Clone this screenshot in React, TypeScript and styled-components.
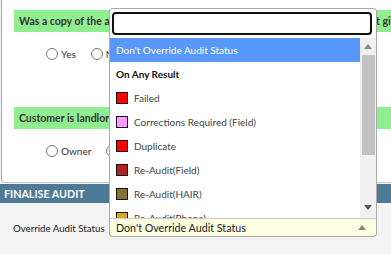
import React from "react";
import styled, { createGlobalStyle } from "styled-components";

const GlobalStyle = createGlobalStyle`
    html, body {
        margin: 0;
        padding: 0;
        background: #f3f3f3;
        font-family: "Lato", "Noto Sans", sans-serif;
        overflow: hidden;
    }
`;

interface Option {
    label: string;
    color: string;
}

const statusOptions: Option[] = [
    { label: "Failed", color: "#ff0000" },
    { label: "Corrections Required (Field)", color: "#ff99ff" },
    { label: "Duplicate", color: "#ff0000" },
    { label: "Re-Audit(Field)", color: "#b22222" },
    { label: "Re-Audit(HAIR)", color: "#807535" },
    { label: "Re-Audit(Phone)", color: "#daa520" },
];

const Page = styled.div`
    width: 391px;
    height: 254px;
    overflow: hidden;
`;

const Card = styled.div`
    margin-left: 1px;
    height: 183px;
    box-sizing: border-box;
    background: white;
    border-left: 1px solid #a9a9a9;
    border-bottom: 1px solid #c8c8c8;
    border-bottom-left-radius: 4px;
    padding: 10px 0 0 12px;
`;

const Question = styled.div`
    height: 97px;
`;

const QuestionTitle = styled.div`
    height: 22px;
    line-height: 22px;
    background: #90ee90;
    color: #333;
    font-weight: bold;
    font-size: 10.5px;
    padding-left: 5px;
    white-space: nowrap;
    overflow: hidden;
`;

const RadioRow = styled.div`
    display: flex;
    align-items: center;
    padding: 16px 0 0 32px;
    gap: 15px;
`;

const RadioOption = styled.label`
    display: flex;
    align-items: center;
    gap: 3px;
    font-size: 10px;
    color: #333;
`;

const RadioCircle = styled.span`
    width: 10px;
    height: 10px;
    border: 1px solid #767676;
    border-radius: 50%;
    background: white;
`;

const SectionHeader = styled.div`
    height: 19px;
    line-height: 19px;
    margin-top: 1px;
    background: #4e7a97;
    color: white;
    font-weight: bold;
    font-size: 10.7px;
    padding-left: 4px;
`;

const FormRow = styled.div`
    display: flex;
    align-items: center;
    padding: 15px 0 0 13px;
`;

const FieldLabel = styled.div`
    width: 96px;
    font-size: 9.7px;
    color: #222;
    white-space: nowrap;
`;

const SelectWrap = styled.div`
    position: relative;
    width: 268px;
`;

const SelectBox = styled.div`
    height: 19px;
    box-sizing: border-box;
    border: 1px solid #aaa;
    border-top-color: #ccc;
    border-radius: 0 0 4px 4px;
    background: #fdfde2;
    display: flex;
    align-items: center;
    justify-content: space-between;
    padding: 0 10px 0 6px;
    font-size: 10.7px;
    color: #222;
`;

const Arrow = styled.span<{ $up?: boolean }>`
    width: 0;
    height: 0;
    border-left: 4px solid transparent;
    border-right: 4px solid transparent;
    ${(p) => (p.$up ? "border-bottom: 5px solid #888;" : "border-top: 5px solid #555;")}
`;

const Dropdown = styled.div`
    position: absolute;
    left: 0;
    bottom: 100%;
    width: 268px;
    height: 210px;
    box-sizing: border-box;
    background: white;
    border: 1px solid #aaa;
    border-bottom: none;
    border-radius: 4px 4px 0 0;
    display: flex;
    flex-direction: column;
`;

const SearchArea = styled.div`
    padding: 3px 4px 3px 2px;
`;

const SearchInput = styled.div`
    height: 23px;
    box-sizing: border-box;
    border: 2px solid #111;
    border-radius: 4px;
`;

const ResultsArea = styled.div`
    flex: 1;
    display: flex;
    overflow: hidden;
`;

const Results = styled.div`
    flex: 1;
    overflow: hidden;
`;

const Row = styled.div<{ $highlighted?: boolean; $group?: boolean }>`
    height: 24px;
    display: flex;
    align-items: center;
    gap: 6px;
    padding-left: 6px;
    font-size: 10px;
    white-space: nowrap;
    background: ${(p) => (p.$highlighted ? "#5897fb" : "transparent")};
    color: ${(p) => (p.$highlighted ? "white" : p.$group ? "#111" : "#444")};
    font-weight: ${(p) => (p.$group ? "bold" : "normal")};
`;

const Swatch = styled.span<{ $color: string }>`
    width: 12px;
    height: 12px;
    box-sizing: border-box;
    border: 1px solid #111;
    background: ${(p) => p.$color};
    flex-shrink: 0;
`;

const Scrollbar = styled.div`
    width: 16px;
    background: #f0f0f0;
    display: flex;
    flex-direction: column;
    align-items: center;
    padding: 6px 0 8px;
    box-sizing: border-box;
`;

const Thumb = styled.div`
    width: 13px;
    height: 100px;
    margin: 6px 0 auto;
    background: #c1c1c1;
`;

const App: React.FC = () => {
    return (
        <Page>
            <GlobalStyle />
            <Card>
                <Question>
                    <QuestionTitle>Was a copy of the audit report left with the customers at the time of the audit given</QuestionTitle>
                    <RadioRow>
                        <RadioOption><RadioCircle />Yes</RadioOption>
                        <RadioOption><RadioCircle />No</RadioOption>
                    </RadioRow>
                </Question>
                <Question>
                    <QuestionTitle>Customer is landlord or tenant</QuestionTitle>
                    <RadioRow>
                        <RadioOption><RadioCircle />Owner</RadioOption>
                        <RadioOption><RadioCircle />Tenant</RadioOption>
                    </RadioRow>
                </Question>
            </Card>
            <SectionHeader>FINALISE AUDIT</SectionHeader>
            <FormRow>
                <FieldLabel>Override Audit Status</FieldLabel>
                <SelectWrap>
                    <Dropdown>
                        <SearchArea>
                            <SearchInput />
                        </SearchArea>
                        <ResultsArea>
                            <Results>
                                <Row $highlighted>Don't Override Audit Status</Row>
                                <Row $group>On Any Result</Row>
                                {statusOptions.map((o) => (
                                    <Row key={o.label}>
                                        <Swatch $color={o.color} />
                                        {o.label}
                                    </Row>
                                ))}
                            </Results>
                            <Scrollbar>
                                <Arrow $up />
                                <Thumb />
                                <Arrow />
                            </Scrollbar>
                        </ResultsArea>
                    </Dropdown>
                    <SelectBox>
                        Don't Override Audit Status
                        <Arrow $up />
                    </SelectBox>
                </SelectWrap>
            </FormRow>
        </Page>
    );
};

export default App;
